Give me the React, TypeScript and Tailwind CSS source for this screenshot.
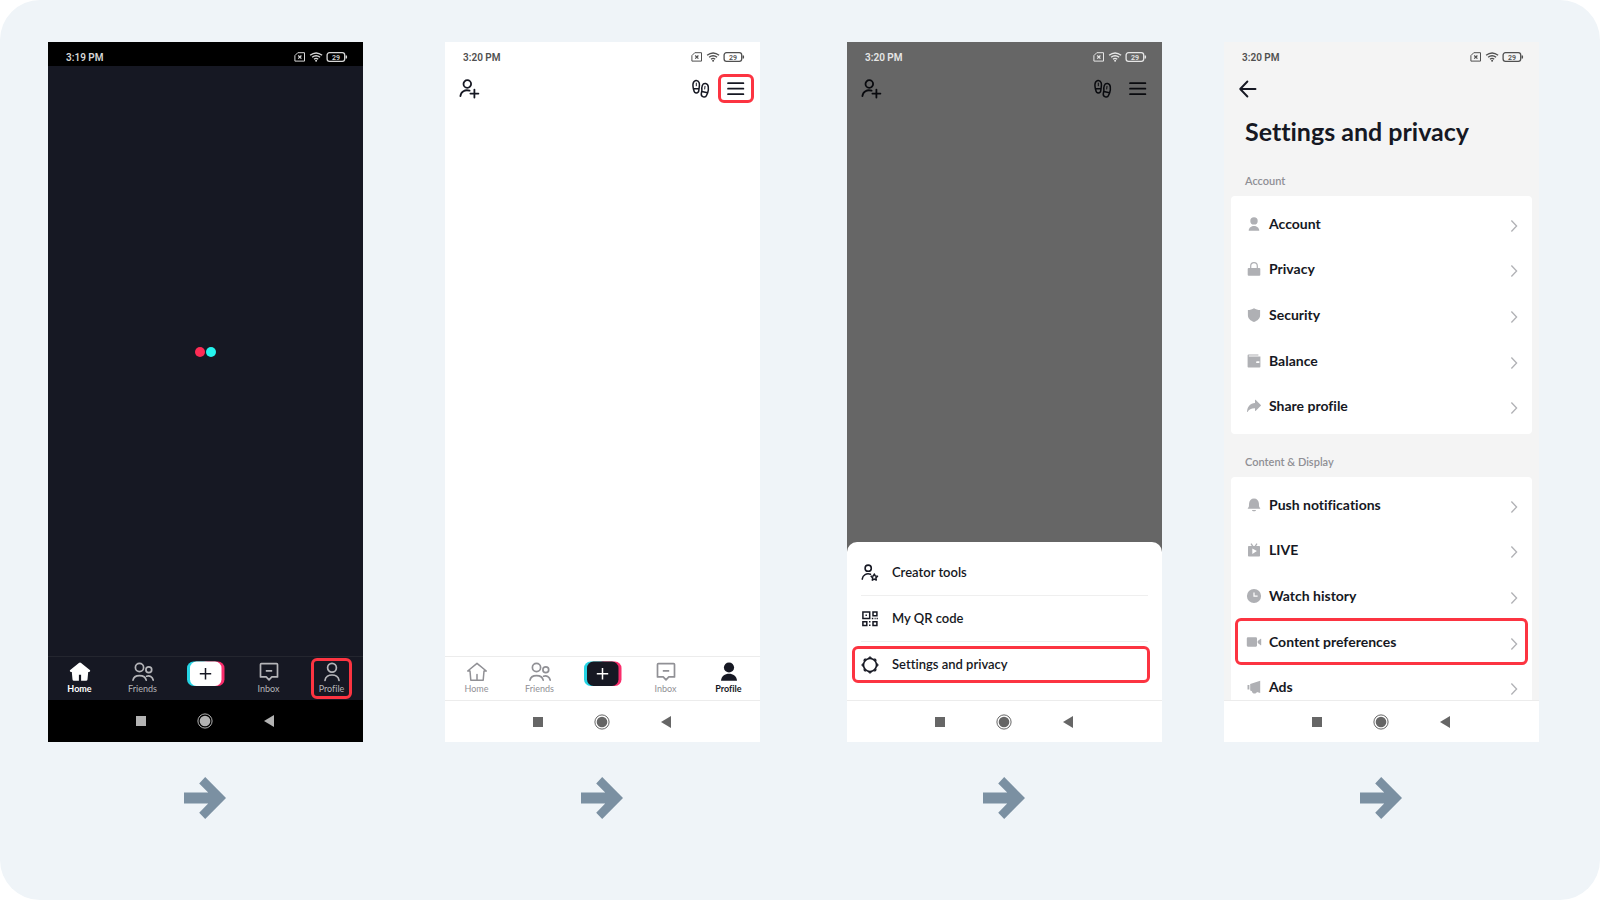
import React from 'react';
import clsx from 'clsx';

type Tone = 'dark' | 'light' | 'dim' | 'grey';

const statusTone: Record<Tone, string> = {
  dark: 'bg-black text-[#d6d6d6]',
  light: 'bg-white text-[#505050]',
  dim: 'text-[#e6e6e6]',
  grey: 'text-[#505050]',
};

function StatusIcons() {
  return (
    <svg width="54" height="12" viewBox="0 0 54 12" fill="none" stroke="currentColor" aria-hidden="true">
      <path d="M3.800 1.700h6.700v8.400H.9V4.600z" strokeWidth="1" strokeLinejoin="round" />
      <path d="m4.200 4.500 3.200 3.200m0-3.200L4.200 7.700" strokeWidth="1.200" />
      <path d="M16.100 4.300q6-4.700 12 0M18.100 6.300q4-3 8 0M20 8.200q2.100-1.600 4.200 0" strokeWidth="1.400" />
      <circle cx="22.100" cy="9.700" r="1" fill="currentColor" stroke="none" />
      <rect x="33.100" y="1.700" width="17.600" height="8.600" rx="2.400" strokeWidth="1.300" />
      <path d="M52.300 4.500v3" strokeWidth="1.500" />
      <text x="42" y="8.600" textAnchor="middle" fontSize="7" fill="currentColor" stroke="none">29</text>
    </svg>
  );
}

function StatusBar({ time, tone }: { time: string; tone: Tone }) {
  return (
    <div className={clsx('flex h-6 shrink-0 items-center justify-between pt-1.5 pr-[15px] pl-[18px] font-[Roboto,sans-serif] text-[10px] font-semibold', statusTone[tone])}>
      <span>{time}</span>
      <StatusIcons />
    </div>
  );
}

function SystemNav({ dark = false }: { dark?: boolean }) {
  return (
    <div className={clsx('flex h-[42px] shrink-0 items-center justify-center gap-[51px] pr-0.5', dark ? 'bg-black text-[#b3b3b3]' : 'border-t border-[#ececec] bg-white text-[#666]')}>
      <button aria-label="Recent apps" className="size-2.5 bg-current" />
      <button aria-label="Home screen">
        <svg width="16" height="16" viewBox="0 0 16 16">
          <circle cx="8" cy="8" r="7.100" fill="none" stroke="currentColor" strokeWidth="1" />
          <circle cx="8" cy="8" r="5.300" fill="currentColor" />
        </svg>
      </button>
      <button aria-label="Back">
        <svg width="10" height="12" viewBox="0 0 10 12"><path d="M10 0v12L0 6z" fill="currentColor" /></svg>
      </button>
    </div>
  );
}

function HomeIcon({ filled }: { filled?: boolean }) {
  return filled ? (
    <svg width="22" height="20" viewBox="0 0 22 20" fill="currentColor">
      <path d="M9.900.9a1.700 1.700 0 0 1 2.200 0l8.700 7.200c.7.600.3 1.800-.7 1.800h-.9l-.7 7.500a1.500 1.500 0 0 1-1.500 1.400h-4.900v-6h-2.200v6H5a1.500 1.500 0 0 1-1.500-1.400L2.800 9.900h-.9c-1 0-1.400-1.200-.7-1.800z" />
    </svg>
  ) : (
    <svg width="22" height="20" viewBox="0 0 22 20" fill="none" stroke="currentColor" strokeWidth="1.500" strokeLinejoin="round" strokeLinecap="round">
      <path d="M11 1.300 20.300 9H18l-.8 9.200H4.800L4 9H1.700zM11 12.500v5.500" />
    </svg>
  );
}

function FriendsIcon() {
  return (
    <svg width="22" height="20" viewBox="0 0 22 20" fill="none" stroke="currentColor" strokeWidth="1.700" strokeLinecap="round">
      <circle cx="7.500" cy="5.500" r="4.100" />
      <circle cx="16.800" cy="7.700" r="2.900" />
      <path d="M1 18.200c1-6.100 12-6.100 13.200 0M14.600 14.200c2.800-1.200 6 .4 6.600 4" />
    </svg>
  );
}

function InboxIcon() {
  return (
    <svg width="20" height="20" viewBox="0 0 20 20" fill="none" stroke="currentColor" strokeWidth="1.700" strokeLinejoin="round">
      <path d="M2.400 1.700h15.200c.6 0 .9.300.9.900v12.300h-5.700L10 17.800l-2.800-2.900H1.500V2.600c0-.6.300-.9.900-.9zM6.800 8.900h6.400" />
    </svg>
  );
}

function ProfileIcon({ filled }: { filled?: boolean }) {
  return filled ? (
    <svg width="18" height="20" viewBox="0 0 18 20" fill="currentColor">
      <circle cx="9" cy="5.500" r="5.100" />
      <path d="M1 18.700c.3-9.400 15.700-9.400 16 0z" />
    </svg>
  ) : (
    <svg width="18" height="20" viewBox="0 0 18 20" fill="none" stroke="currentColor" strokeWidth="1.700" strokeLinecap="round">
      <circle cx="9" cy="5.700" r="4.400" />
      <path d="M2 18.300c1-7.100 13-7.100 14 0" />
    </svg>
  );
}

function Highlight({ className }: { className: string }) {
  return <span className={clsx('pointer-events-none absolute rounded-md border-3 border-[#fc3441]', className)} />;
}

function TabBar({ dark = false }: { dark?: boolean }) {
  const idle = dark ? 'text-[#b5b5b9]' : 'text-[#909095]';
  const active = dark ? 'font-bold text-white' : 'font-bold text-[#161823]';
  const tab = 'relative flex flex-col items-center pt-[5px]';
  const label = 'mt-px text-[9px] leading-3';
  return (
    <nav className={clsx('grid h-11 shrink-0 grid-cols-5 border-t', dark ? 'border-[#24262f] bg-[#161823]' : 'border-[#ececec] bg-white')}>
      <button className={clsx(tab, dark ? active : idle)}>
        <HomeIcon filled={dark} />
        <span className={label}>Home</span>
      </button>
      <button className={clsx(tab, idle)}>
        <FriendsIcon />
        <span className={label}>Friends</span>
      </button>
      <button aria-label="Create" className="flex justify-center pt-1">
        <svg width="38" height="26" viewBox="0 0 38 26">
          <rect x="0" y=".5" width="25" height="24.500" rx="6.500" fill="#25d4e4" />
          <rect x="12.500" y=".5" width="25" height="24.500" rx="6.500" fill="#fa2d6c" />
          <rect x="3" y=".5" width="31.500" height="24.500" rx="6.500" fill={dark ? '#fff' : '#161823'} />
          <path d="M12.800 12.800h11.400M18.500 7.100v11.400" stroke={dark ? '#161823' : '#fff'} strokeWidth="1.500" />
        </svg>
      </button>
      <button className={clsx(tab, idle)}>
        <InboxIcon />
        <span className={label}>Inbox</span>
      </button>
      <button className={clsx(tab, dark ? idle : active)}>
        <ProfileIcon filled={!dark} />
        <span className={label}>Profile</span>
        {dark && <Highlight className="inset-x-[11px] top-px bottom-px" />}
      </button>
    </nav>
  );
}

function ProfileHeader({ highlight = false }: { highlight?: boolean }) {
  return (
    <header className={clsx('flex items-center pt-2 pr-1.5 pl-3.5', highlight ? 'text-[#161823]' : 'text-[#090a0e]')}>
      <button aria-label="Add friends" className="mr-auto">
        <svg width="22" height="20" viewBox="0 0 22 20" fill="none" stroke="currentColor" strokeWidth="1.800" strokeLinecap="round">
          <circle cx="8.300" cy="5" r="3.800" />
          <path d="M1.400 17.200c.4-4.600 4.600-7 9.200-5.500M15.400 10.600v8M11.400 14.600h8" />
        </svg>
      </button>
      <button aria-label="Profile views" className="mr-2">
        <svg width="18" height="20" viewBox="0 0 18 20" fill="none" stroke="currentColor" strokeWidth="1.500" strokeLinecap="round">
          <path d="M1.500 10.300C.5 6.200.6 1.900 3.900 1.400c3.400-.3 3.900 3.300 3.300 6.900l-.4 3.200c-.3 3.400-4.600 3.200-4.900 0zM1.700 9.600l5.300.2" />
          <path d="M15.700 13.700c1.100-3.900 1.200-8.600-2.100-9.100-3.400-.5-4.100 3.100-3.700 6.800l-.6 3.300c-.6 3.400 4.200 4.600 5.300 1.500zM9.900 12.600l5.500 1.200" />
          <path d="M4.300 4.100v2.700M13 7.300l-.3 2.700" strokeWidth="1" />
        </svg>
      </button>
      <button aria-label="Menu" className={clsx('flex h-[29px] w-9 items-center justify-center rounded-md border-3', highlight ? 'border-[#fc3441]' : 'border-transparent')}>
        <svg width="18" height="14" viewBox="0 0 18 14" stroke="currentColor" strokeWidth="1.700" strokeLinecap="round">
          <path d="M1 1.200h15.400M1 6.700h15.400M1 12.200h15.400" />
        </svg>
      </button>
    </header>
  );
}

function CreatorIcon() {
  return (
    <svg width="18" height="18" viewBox="0 0 18 18" fill="none" stroke="currentColor" strokeWidth="1.500" strokeLinejoin="round">
      <circle cx="7.200" cy="4.200" r="3.100" strokeWidth="1.600" />
      <path d="M1.200 15.200c.5-4.300 4.500-6.200 8.300-4.900" strokeLinecap="round" />
      <path d="m13.300 10 1 2 2.200.3-1.600 1.600.4 2.200-2-1-2 1 .4-2.200-1.600-1.600 2.200-.3z" />
    </svg>
  );
}

function QrIcon() {
  return (
    <svg width="18" height="18" viewBox="0 0 18 18" fill="none" stroke="currentColor" strokeWidth="1.500">
      <path d="M1.900 1.900h6.800v6.600H1.900zM12 1.900h3.900v3.800H12zM1.900 11.800h3.900v3.800H1.900zM12 11.800h3.900v3.800H12z" />
      <path d="M4.500 4.500h1.400v1.400H4.500zM10.800 7.800h1.500v1.500h-1.500zM13.600 7.800h1v1.500h-1zM15.600 7.800h1.200v1.500h-1.200zM8 11.100h1.500v1.500H8zM8 14.500h1.500v1.500H8z" fill="currentColor" stroke="none" />
    </svg>
  );
}

function GearIcon() {
  return (
    <svg width="18" height="18" viewBox="0 0 18 18" fill="currentColor" stroke="currentColor">
      <circle cx="9" cy="9" r="6.500" fill="none" strokeWidth="1.600" />
      <path d="M7.400 1.800 9 .6l1.600 1.200zM7.400 16.200 9 17.400l1.600-1.200zM1.800 7.400.6 9l1.200 1.600zM16.200 7.400 17.400 9l-1.200 1.600zM2.800 5l.3-1.900L5 2.800zM13 2.800l1.900.3.3 1.900zM2.800 13l.3 1.900 1.900.3zM15.200 13l-.3 1.900-1.900.3z" strokeWidth=".6" />
    </svg>
  );
}

const sheetItems = [
  { label: 'Creator tools', icon: <CreatorIcon /> },
  { label: 'My QR code', icon: <QrIcon /> },
  { label: 'Settings and privacy', icon: <GearIcon />, highlight: true },
];

const accountItems = [
  { label: 'Account', icon: <path d="M7 .2a3.700 3.700 0 1 1 0 7.400A3.700 3.700 0 0 1 7 .2M1.700 13.700c.2-6.300 10.400-6.300 10.600 0z" /> },
  {
    label: 'Privacy',
    icon: (
      <>
        <path d="M3.700 7V4a3.300 3.300 0 0 1 6.600 0v3" fill="none" stroke="currentColor" strokeWidth="1.200" />
        <rect x=".7" y="6" width="12.600" height="7.700" rx="1" />
      </>
    ),
  },
  { label: 'Security', icon: <path d="M7 .2c1.900 1.100 3.900 1.700 6.100 1.800v5.200c0 3.200-2.500 5.400-6.100 6.800C3.400 12.600.9 10.400.9 7.200V2C3.100 1.900 5.100 1.300 7 .2" /> },
  { label: 'Balance', icon: <path fillRule="evenodd" d="M1.600.6h9.800v1H1.800v.9h11.600v10.300a.8.800 0 0 1-.8.800H1.400a.8.800 0 0 1-.8-.8V1.600a1 1 0 0 1 1-1M10 7.300h2.400v1.800H10a.9.900 0 0 1 0-1.800" /> },
  { label: 'Share profile', icon: <path d="M8 1.200c0-.5.500-.6.800-.3l5 5c.3.300.3.600 0 .9l-5 5c-.3.300-.8.200-.8-.3V9.200c-3.700-.1-6 1.200-7.400 3.700-.2.400-.7.200-.6-.3C.5 7.600 3.200 4.400 8 4.100z" /> },
];

const displayItems = [
  { label: 'Push notifications', icon: <path d="M7 .4c2.900 0 4.700 2.100 4.900 4.800l.2 3.400 1.300 2.200H.6l1.300-2.200.2-3.400C2.300 2.500 4.100.4 7 .4M4.900 11.900h4.200c-.2 1.900-4 1.900-4.200 0" /> },
  {
    label: 'LIVE',
    icon: (
      <>
        <path d="m4 .6 1.900 2.700M10 .6 8.100 3.300" stroke="currentColor" strokeWidth="1.300" />
        <path fillRule="evenodd" d="M1.800 3h10.400a.8.800 0 0 1 .8.800v8.900a.8.800 0 0 1-.8.800H1.800a.8.800 0 0 1-.8-.8V3.800A.8.800 0 0 1 1.800 3M5.300 5.400v5.500L9.900 8.100z" />
      </>
    ),
  },
  { label: 'Watch history', icon: <path fillRule="evenodd" d="M7-.1a7.100 7.100 0 1 1 0 14.200A7.100 7.100 0 0 1 7-.1M6.400 3.400v4.300h4.200V6.500h-3V3.400z" /> },
  { label: 'Content preferences', highlight: true, icon: <path d="M.9 2.300h8a1.100 1.100 0 0 1 1.100 1.100v7.200a1.100 1.100 0 0 1-1.100 1.100h-8a1.100 1.100 0 0 1-1.100-1.100V3.400A1.100 1.100 0 0 1 .9 2.300M10.700 6l3-2.200c.2-.2.500 0 .5.300v5.900c0 .3-.3.500-.5.300l-3-2.200z" /> },
  { label: 'Ads', icon: <path d="M3.200 3.900 13.200.7v12.400l-3.300-1c-.6 2.200-4.800 2-5-.9l-1.700-.8zM.5 4.900h1.900v4.700H.5z" /> },
];

type SettingItem = { label: string; icon: React.ReactNode; highlight?: boolean };

function SettingsSection({ title, items }: { title: string; items: SettingItem[] }) {
  return (
    <section className="px-[7px]">
      <h2 className="px-3.5 pb-[7px] text-[11px] leading-4 font-semibold text-[#8f8f94]">{title}</h2>
      <ul className="grid h-[238px] auto-rows-fr rounded bg-white py-[5px]">
        {items.map((item) => (
          <li key={item.label} className="relative">
            <button className="flex h-full w-full items-center pr-3.5 pl-4 text-left">
              <svg width="14" height="14" viewBox="0 0 14 14" fill="currentColor" className="shrink-0 overflow-visible text-[#afb0b4]">{item.icon}</svg>
              <span className="ml-2 flex-1 text-sm font-bold">{item.label}</span>
              <svg width="8" height="14" viewBox="0 0 8 14" fill="none" stroke="#b0b1b5" strokeWidth="1.300" className="mt-1">
                <path d="m1.400 1.500 5.200 5.500-5.200 5.500" />
              </svg>
            </button>
            {item.highlight && <Highlight className="inset-x-1 -top-px -bottom-px" />}
          </li>
        ))}
      </ul>
    </section>
  );
}

function Step({ className, children }: { className: string; children: React.ReactNode }) {
  return (
    <li className="flex flex-col items-start">
      <div className={clsx('flex aspect-[9/20] w-full max-w-[315px] flex-col overflow-hidden', className)}>{children}</div>
      <div className="flex w-full max-w-[315px] justify-center pt-[35px] pr-0.5 text-[#7b90a2]">
        <svg width="44" height="42" viewBox="0 0 44 42" fill="currentColor" aria-hidden="true">
          <path d="M1 15.400h24.200L16.200 6.500 22.200 0 43 21 22.200 42l-6-6.300 9-9.100H1z" />
        </svg>
      </div>
    </li>
  );
}

export default function App() {
  return (
    <div className="min-h-screen bg-white font-[Lato,sans-serif] text-[#161823] [font-variant-ligatures:no-common-ligatures]">
      <main className="min-h-screen rounded-[40px] bg-[#eff4f8] pt-[42px] pl-12">
        <ol className="grid grid-cols-[397fr_402fr_377fr_376fr]">
          <Step className="bg-[#161823]">
            <StatusBar time="3:19 PM" tone="dark" />
            <div className="flex flex-1 items-center justify-center gap-px pb-[18px]">
              <span className="size-2.5 rounded-full bg-[#fe2c55]" />
              <span className="size-2.5 rounded-full bg-[#25f4ee]" />
            </div>
            <TabBar dark />
            <SystemNav dark />
          </Step>

          <Step className="bg-white">
            <StatusBar time="3:20 PM" tone="light" />
            <div className="flex-1">
              <ProfileHeader highlight />
            </div>
            <TabBar />
            <SystemNav />
          </Step>

          <Step className="bg-[#666]">
            <StatusBar time="3:20 PM" tone="dim" />
            <div className="flex-1">
              <ProfileHeader />
            </div>
            <ul className="rounded-t-[10px] bg-white px-3.5 pt-2 pb-3">
              {sheetItems.map((item) => (
                <li key={item.label} className="relative border-b border-[#efefef] last:border-transparent">
                  <button className="flex h-[45px] w-full items-center gap-[13px] text-left text-[13px] font-semibold">
                    {item.icon}
                    {item.label}
                  </button>
                  {item.highlight && <Highlight className="top-1 -right-0.5 bottom-1 -left-[9px]" />}
                </li>
              ))}
            </ul>
            <SystemNav />
          </Step>

          <Step className="bg-[#f4f4f4]">
            <StatusBar time="3:20 PM" tone="grey" />
            <div className="min-h-0 flex-1 overflow-hidden">
              <button aria-label="Go back" className="mt-3.5 ml-3.5 block">
                <svg width="20" height="18" viewBox="0 0 20 18" fill="none" stroke="currentColor" strokeWidth="1.900" strokeLinecap="round" strokeLinejoin="round">
                  <path d="M9.400 1.500 2.200 9l7.200 7.500M2.200 9h15.300" />
                </svg>
              </button>
              <h1 className="px-[21px] pt-[17px] text-[25px] leading-8 font-bold">Settings and privacy</h1>
              <div className="flex flex-col gap-5 pt-[26px]">
                <SettingsSection title="Account" items={accountItems} />
                <SettingsSection title="Content &amp; Display" items={displayItems} />
              </div>
            </div>
            <SystemNav />
          </Step>
        </ol>
      </main>
    </div>
  );
}
